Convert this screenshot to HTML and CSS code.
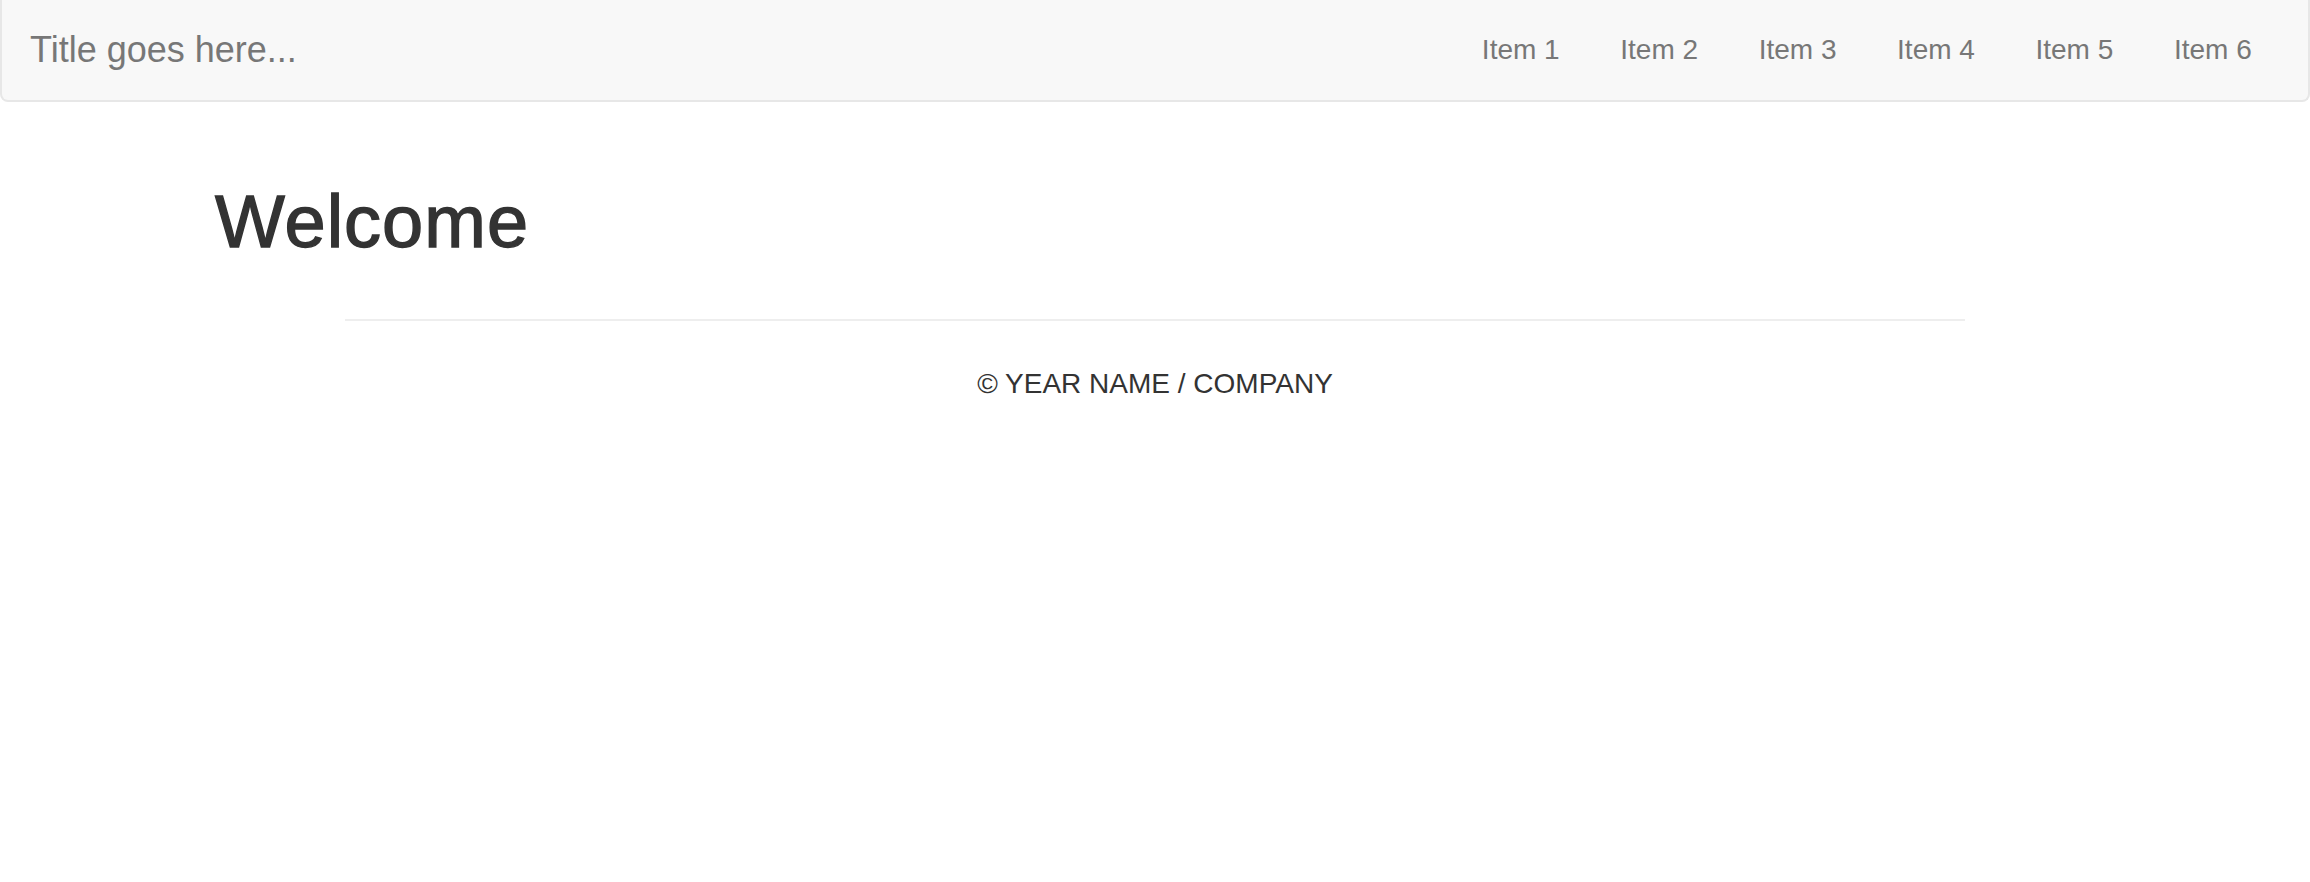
FILE: index.html
```html
<!DOCTYPE html>
<html lang="en">
<head>
<meta charset="utf-8">
<title>Welcome</title>
<link rel="stylesheet" href="styles.css">
</head>
<body>
<nav class="navbar">
  <a class="brand" href="#">Title goes here...</a>
  <ul class="nav">
    <li><a href="#">Item 1</a></li>
    <li><a href="#">Item 2</a></li>
    <li><a href="#">Item 3</a></li>
    <li><a href="#">Item 4</a></li>
    <li><a href="#">Item 5</a></li>
    <li><a href="#">Item 6</a></li>
  </ul>
</nav>
<main class="container">
  <h1 class="title">Welcome</h1>
</main>
<footer class="footer">
  <hr class="rule">
  <p class="copy">© YEAR NAME / COMPANY</p>
</footer>
</body>
</html>
```

FILE: styles.css
```css
html, body {
  margin: 0;
  padding: 0;
  background: #fff;
  font-family: "Liberation Sans", Arial, sans-serif;
  color: #333;
}

.navbar {
  display: flex;
  justify-content: space-between;
  align-items: flex-start;
  height: 100px;
  background: #f8f8f8;
  border: 2px solid #e7e7e7;
  border-top: 0;
  border-radius: 0 0 8px 8px;
  box-sizing: content-box;
  padding: 0 26px 0 0;
}

.brand {
  display: block;
  padding: 30px 30px 30px 28px;
  font-size: 36px;
  line-height: 40px;
  color: #777;
  text-decoration: none;
}

.nav {
  display: flex;
  list-style: none;
  margin: 0;
  padding: 0;
}

.nav a {
  display: block;
  padding: 30px 30.3px;
  font-size: 28px;
  line-height: 40px;
  color: #777;
  text-decoration: none;
}

.container {
  width: 1880px;
  margin: 0 auto;
  padding: 0 30px;
}

.title {
  margin: 80px 0 0 0;
  font-size: 74px;
  line-height: 80px;
  font-weight: 400;
  letter-spacing: 1px;
  color: #333;
  -webkit-text-stroke: 1.4px #333;
}

.footer {
  width: 1620px;
  margin: 0 auto;
  text-align: center;
}

.rule {
  margin: 57px 0 0 0;
  border: 0;
  border-top: 2px solid #eee;
  height: 0;
}

.copy {
  margin: 43px 0 0 0;
  font-size: 28px;
  line-height: 40px;
  color: #333;
}
```
